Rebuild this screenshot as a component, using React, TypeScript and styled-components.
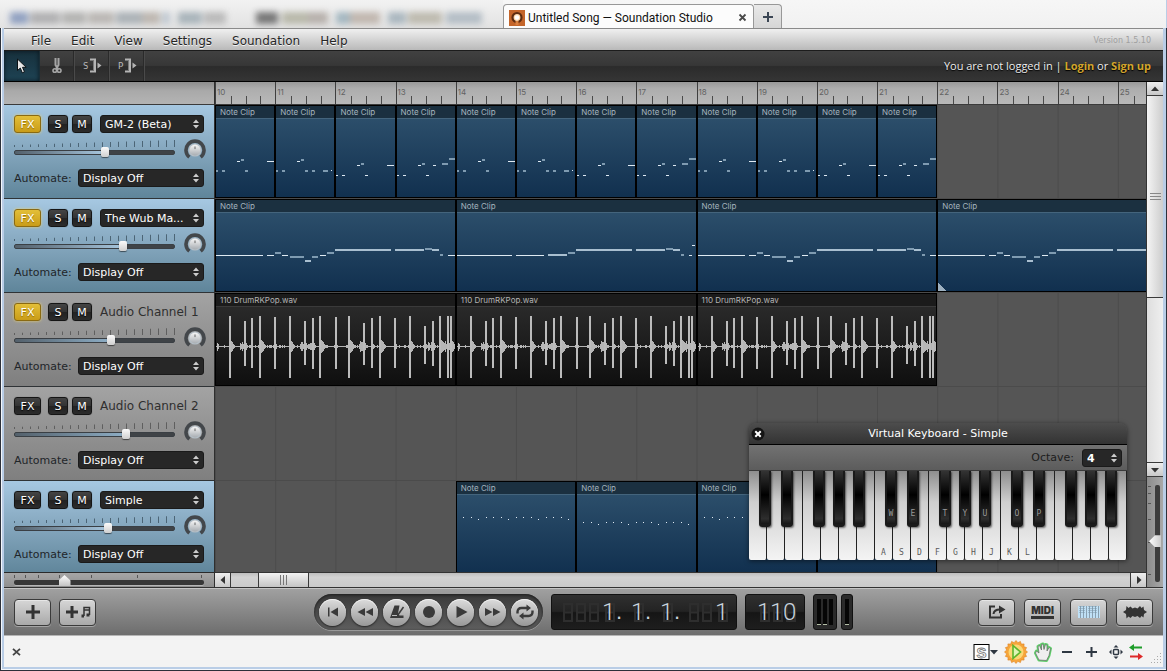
import React from "react";
import styled, { createGlobalStyle, css } from "styled-components";

const sans = '"DejaVu Sans", Verdana, sans-serif';
const tiny = '"Inter", "Liberation Sans", sans-serif';
const chrome = '"Open Sans", "Noto Sans", sans-serif';

const GlobalStyle = createGlobalStyle`
  *, *::before, *::after { box-sizing: border-box; }
  body { margin: 0; background: #f3f3f3; font-family: ${sans}; font-size: 12px; }
  button, select, input { font: inherit; margin: 0; padding: 0; }
  svg { display: block; }
`;

/* ---------- window frame ---------- */

const Page = styled.div`
  display: flex;
  flex-direction: column;
  height: 100vh;
  overflow: hidden;
`;

const TabStrip = styled.header`
  display: flex;
  align-items: flex-end;
  height: 28px;
  flex: none;
  background: linear-gradient(#f6f6f6, #f1f1f1);
  border-right: 1px solid #b9cde6;
`;

const BlurredTabs = styled.div`
  width: 503px;
  height: 28px;
  overflow: hidden;
  background: linear-gradient(#f2f2f2, #e2e2e2);
  svg { filter: blur(3px); opacity: 0.8; }
`;

const Tab = styled.div`
  display: flex;
  align-items: center;
  width: 251px;
  height: 24px;
  padding: 2px 6px 0 5px;
  background: #fcfcfc;
  border: 1px solid #989898;
  border-bottom: 0;
  border-radius: 4px 4px 0 0;
  font-family: "Roboto", ${chrome};
  font-size: 12px;
  line-height: 16px;
  color: #111;
`;

const TabTitle = styled.span`
  flex: 1;
  margin-left: 3px;
  white-space: nowrap;
`;

const PlainButton = styled.button`
  display: flex;
  align-items: center;
  justify-content: center;
  border: 0;
  background: none;
  color: inherit;
`;

const NewTab = styled(PlainButton)`
  width: 28px;
  height: 24px;
  border: 1px solid #989898;
  border-left: 0;
  border-bottom: 0;
  border-radius: 0 4px 0 0;
  background: linear-gradient(#e9e9e9, #d6d6d6);
`;

const Frame = styled.div`
  flex: 1;
  min-height: 0;
  display: flex;
  flex-direction: column;
  padding: 0 3px 3px;
  background: #b9cde6;
  border: 1px solid #2c303a;
  border-top: 0;
  box-shadow: inset 1px -1px 0 #f4f7fb;
`;

const Studio = styled.main`
  position: relative;
  flex: 1;
  min-height: 0;
  display: flex;
  flex-direction: column;
`;

/* ---------- menu and tool bars ---------- */

const MenuBar = styled.nav`
  display: flex;
  align-items: center;
  gap: 20px;
  height: 23px;
  flex: none;
  padding: 2px 12px 0 27px;
  background: linear-gradient(#f0f0f0, #b9b9b9);
  border-top: 1px solid #8a8a8a;
  border-bottom: 1px solid #1c1c1c;
`;

const MenuItem = styled(PlainButton)`
  font-size: 12px;
  line-height: 16px;
  color: #262626;
  text-shadow: 0 1px 0 #f4f4f4;
`;

const Version = styled.span`
  margin-left: auto;
  font-family: ${sans};
  font-size: 8px;
  color: #a0a0a0;
`;

const ToolBar = styled.div`
  display: flex;
  align-items: center;
  height: 31px;
  flex: none;
  background: linear-gradient(#414141 0, #373737 48%, #2b2b2b 52%, #353535 100%);
  border-bottom: 1px solid #000;
`;

const Tool = styled(PlainButton)<{ $active?: boolean }>`
  width: 35px;
  height: 30px;
  border-right: 1px solid #4a4a4a;
  box-shadow: inset -1px 0 0 #2a2a2a;
  ${(p) => p.$active && css`
    width: 36px;
    background: linear-gradient(#17303c, #1e4354);
    border-right-color: #1a2d36;
    box-shadow: inset 0 0 4px #0a171e;
  `}
`;

const Account = styled.p`
  margin: 0 12px 0 auto;
  font-family: ${chrome};
  font-size: 11px;
  line-height: 16px;
  color: #eee;
  text-shadow: 0 1px 1px #000;
  a { color: #d3a52c; font-weight: 700; text-decoration: none; }
`;

/* ---------- workspace ---------- */

const Workspace = styled.div`
  flex: 1;
  min-height: 0;
  display: grid;
  grid-template-columns: 211px minmax(0, 1fr) 17px;
  grid-template-rows: minmax(0, 1fr);
`;

const Column = styled.div`
  display: flex;
  flex-direction: column;
  min-height: 0;
`;

const HeadColumn = styled(Column)`
  border-right: 1px solid #2f2f2f;
`;

const RulerCorner = styled.div`
  height: 23px;
  flex: none;
  background: linear-gradient(#8d8d8d, #a9a9a9 40%, #b4b4b4);
  border-bottom: 1px solid #3b3b3b;
`;

const Clipped = styled.div`
  flex: 1;
  min-height: 0;
  overflow: hidden;
`;

const TrackHead = styled.section<{ $tone: "blue" | "grey" }>`
  display: flex;
  flex-direction: column;
  height: 94px;
  padding: 10px 10px 0;
  border-bottom: 1px solid #2f3336;
  background: ${(p) => p.$tone === "blue"
    ? "linear-gradient(#a6c8e2, #84a6bd 50%, #5f859a)"
    : "linear-gradient(#a3a3a3, #919191 50%, #7f7f7f)"};
`;

const HeadRow = styled.div`
  display: flex;
  align-items: center;
  height: 18px;
`;

const Pad = styled.button<{ $lit?: boolean; $wide?: boolean }>`
  width: ${(p) => (p.$wide ? 27 : 20)}px;
  height: 18px;
  padding-top: 1px;
  margin-right: ${(p) => (p.$wide ? 7 : 4)}px;
  border: 1px solid #151515;
  border-radius: 3px;
  background: linear-gradient(#444 0, #333 48%, #222 52%, #2c2c2c);
  box-shadow: 0 0 1px #00000066;
  color: #fff;
  font-size: 11px;
  line-height: 15px;
  text-shadow: 0 1px 1px #000;
  ${(p) => p.$lit && css`
    border-color: #8a6a12;
    background: linear-gradient(#e3bf38, #c99c18);
    box-shadow: 0 0 3px #e6d070;
    text-shadow: 0 1px 1px #8d6a05;
  `}
`;

const SelectBox = styled.span<{ $grow?: boolean; $gap?: number }>`
  display: grid;
  align-items: center;
  flex: ${(p) => (p.$grow ? "1" : "none")};
  min-width: 0;
  margin-left: ${(p) => p.$gap ?? 0}px;
  & > * { grid-area: 1 / 1; }
  svg { justify-self: end; margin-right: 4px; pointer-events: none; }
`;

const Select = styled.select<{ $bold?: boolean }>`
  appearance: none;
  width: 100%;
  height: 18px;
  padding: 1px 14px 0 4px;
  border: 1px solid #1a1a1a;
  border-radius: 3px;
  background: #272727;
  color: #fff;
  font-size: 11px;
  font-weight: ${(p) => (p.$bold ? 700 : 400)};
  line-height: 16px;
`;

const OctaveSelect = styled(Select)`
  width: 40px;
`;

const ChannelName = styled.span`
  margin-left: 4px;
  font-size: 12px;
  line-height: 16px;
  color: #2f2f2f;
`;

const VolumeRow = styled.div`
  display: flex;
  align-items: flex-start;
  justify-content: space-between;
  height: 36px;
  padding-top: 6px;
  margin-right: -2px;
`;

const VolumeBox = styled.div`
  display: flex;
  flex-direction: column;
`;

const Volume = styled.input<{ $fill: number; $tone: "blue" | "grey" }>`
  appearance: none;
  width: 161px;
  height: 10px;
  background: none;
  &::-webkit-slider-runnable-track {
    height: 5px;
    border-radius: 2px;
    border: 1px solid #3a3f44;
    background: linear-gradient(90deg, #53606b, ${(p) => (p.$tone === "blue" ? "#a8c8e0" : "#8fb0c8")} ${(p) => p.$fill}%, #3f4347 ${(p) => p.$fill}%);
  }
  &::-webkit-slider-thumb {
    appearance: none;
    width: 8px;
    height: 10px;
    margin-top: -4px;
    border-radius: 2px;
    background: linear-gradient(#fbfbfb, #cfcfcf);
    box-shadow: 0 1px 1px #00000088;
  }
`;

const AutomateLabel = styled.label`
  padding-top: 2px;
  font-size: 11px;
  line-height: 16px;
  width: 64px;
  color: #1f2529;
`;

const ZoomX = styled.div`
  height: 16px;
  flex: none;
  padding: 2px 10px 0;
  border-top: 1px solid #2a2a2a;
  border-bottom: 1px solid #333;
  background: linear-gradient(#a6a6a6, #8f8f8f);
  display: grid;
  & > * { grid-area: 1 / 1; }
`;

const ZoomXInput = styled.input`
  appearance: none;
  width: 100%;
  height: 12px;
  background: none;
  &::-webkit-slider-runnable-track {
    height: 5px;
    margin-top: 3px;
    border-radius: 2px;
    background: #373737;
    box-shadow: 0 1px 0 #b5b5b5;
  }
  &::-webkit-slider-thumb {
    appearance: none;
    width: 12px;
    height: 11px;
    margin-top: -5px;
    background: linear-gradient(#fff, #c4c4c4);
    clip-path: polygon(50% 0, 100% 50%, 100% 100%, 0 100%, 0 50%);
  }
`;

/* ---------- timeline ---------- */

const Timeline = styled(Column)`
  background: #555;
  overflow: hidden;
`;

const Ruler = styled.div`
  height: 23px;
  flex: none;
  overflow: hidden;
  border-bottom: 1px solid #3b3b3b;
  background: linear-gradient(#999, #adadad 30%, #b9b9b9);
`;

const Bars = styled.div`
  display: grid;
  grid-template-columns: repeat(16, 1fr);
  width: 963px;
  height: 100%;
`;

const Bar = styled.div`
  display: grid;
  grid-template-columns: repeat(4, 1fr);
  align-items: end;
  height: 22px;
  border-left: 1px solid #3f3f3f;
  & > * { grid-row: 1; }
`;

const BarNumber = styled.span`
  grid-column: 1 / -1;
  align-self: start;
  padding: 5px 0 0 1px;
  font-family: ${tiny};
  font-size: 8px;
  line-height: 10px;
  color: #626262;
`;

const Tick = styled.i<{ $at: number }>`
  grid-column: ${(p) => p.$at};
  height: 8px;
  border-left: 1px solid #4a4a4a;
`;

const Lane = styled.div`
  height: 94px;
  overflow: hidden;
  border-bottom: 1px solid #4b4b4b;
  background: #555;
`;

const LaneGrid = styled(Bars)`
  background: linear-gradient(90deg, #4b4b4b 1px, transparent 1px) 0 0 / 6.25% 100%;
`;

const ClipBox = styled.article<{ $start: number; $span: number; $audio?: boolean }>`
  grid-row: 1;
  grid-column: ${(p) => p.$start} / span ${(p) => p.$span};
  display: flex;
  flex-direction: column;
  min-width: 0;
  height: 93px;
  overflow: hidden;
  border: 1px solid #000;
  background: ${(p) => (p.$audio
    ? "linear-gradient(#2e2e2e, #0f0f0f)"
    : "linear-gradient(#30536f, #11304f)")};
`;

const ClipTitle = styled.h3<{ $audio?: boolean }>`
  flex: none;
  height: 13px;
  margin: 0;
  padding-left: 4px;
  border-bottom: 1px solid ${(p) => (p.$audio ? "#3a3a3a" : "#44647c")};
  background: ${(p) => (p.$audio ? "#1b1b1b" : "#1b3040")};
  font-family: ${tiny};
  font-size: 8px;
  font-weight: 400;
  line-height: 12px;
  white-space: nowrap;
  color: ${(p) => (p.$audio ? "#b4b4b4" : "#a5b4bf")};
`;

/* ---------- scroll bars ---------- */

const HScroll = styled.div`
  display: flex;
  height: 16px;
  flex: none;
  border-top: 1px solid #333;
  border-bottom: 1px solid #333;
  background: linear-gradient(#bebebe, #d2d2d2 30%, #cacaca);
`;

const ScrollButton = styled(PlainButton)<{ $side?: string }>`
  width: 16px;
  height: 14px;
  flex: none;
  background: linear-gradient(#eee, #c8c8c8);
  ${(p) => p.$side && `border-${p.$side}: 1px solid #3a3a3a;`}
`;

const HThumb = styled(PlainButton)`
  width: 51px;
  height: 14px;
  margin: 0 auto 0 27px;
  border: solid #3a3a3a;
  border-width: 0 1px;
  background: linear-gradient(#f2f2f2, #c4c4c4);
`;

const SideColumn = styled(Column)`
  border-left: 1px solid #333;
  background: linear-gradient(90deg, #dedede, #efefef);
`;

const VScroll = styled(Column)`
  flex: 1;
`;

const VThumb = styled(PlainButton)`
  height: 202px;
  width: 16px;
  border-bottom: 1px solid #3a3a3a;
  background: linear-gradient(90deg, #f4f4f4, #cdcdcd);
`;

const ZoomY = styled.div`
  display: grid;
  flex: none;
  height: 112px;
  justify-items: end;
  padding: 8px 1px 5px 0;
  border-top: 1px solid #3a3a3a;
  border-bottom: 1px solid #333;
  background: linear-gradient(90deg, #8c8c8c, #a8a8a8);
  & > * { grid-area: 1 / 1; }
`;

const ZoomYInput = styled.input`
  appearance: none;
  writing-mode: vertical-lr;
  direction: rtl;
  width: 14px;
  height: 97px;
  background: none;
  &::-webkit-slider-runnable-track {
    width: 5px;
    margin-left: 5px;
    border-radius: 2px;
    background: #3c3c3c;
  }
  &::-webkit-slider-thumb {
    appearance: none;
    width: 12px;
    height: 12px;
    margin-left: -6px;
    background: linear-gradient(90deg, #fff, #ccc);
    clip-path: polygon(0 50%, 50% 0, 100% 0, 100% 100%, 50% 100%);
  }
`;

/* ---------- transport ---------- */

const Transport = styled.footer`
  display: grid;
  grid-template-columns: 1fr auto 1fr;
  align-items: center;
  flex: none;
  height: 48px;
  padding: 0 10px;
  border-top: 1px solid #c4c4c4;
  border-bottom: 1px solid #b5b5b5;
  background: linear-gradient(#a0a0a0, #6d6d6d);
`;

const Cluster = styled.div<{ $end?: boolean; $gap: number }>`
  display: flex;
  align-items: center;
  gap: ${(p) => p.$gap}px;
  justify-content: ${(p) => (p.$end ? "flex-end" : "flex-start")};
`;

const BoxButton = styled(PlainButton)`
  width: 37px;
  height: 27px;
  border: 1px solid #3a3a3a;
  border-radius: 4px;
  background: linear-gradient(#d6d6d6, #a9a9a9);
  box-shadow: inset 0 1px 0 #e6e6e6, 0 1px 0 #a5a5a5;
  color: #333;
`;

const MidiText = styled.span`
  border-bottom: 3px solid #333;
  font-family: ${tiny};
  font-size: 10px;
  font-weight: 900;
  line-height: 11px;
`;

const Pill = styled.div`
  display: flex;
  align-items: center;
  gap: 5px;
  height: 36px;
  padding: 0 5px;
  border-radius: 18px;
  background: linear-gradient(#3a3a3a, #5e5e5e);
  box-shadow: inset 0 1px 3px #1c1c1c, 0 1px 0 #999;
`;

const Round = styled(PlainButton)`
  width: 27px;
  height: 27px;
  border-radius: 50%;
  background: linear-gradient(#dcdcdc, #989898);
  box-shadow: inset 0 1px 0 #efefef, 0 1px 2px #222;
`;

const Lcd = styled.output`
  display: flex;
  align-items: center;
  height: 36px;
  padding: 0 11px;
  border-radius: 3px;
  border: 1px solid #111;
  background: linear-gradient(#303030 0, #232323 48%, #151515 52%, #1e1e1e);
`;

const LcdGroup = styled.span`
  display: flex;
  gap: 3px;
`;

const LcdCell = styled.span`
  display: grid;
  align-items: center;
  justify-items: end;
  width: 10px;
  height: 19px;
  font-family: "Liberation Sans Narrow", "Roboto", sans-serif;
  font-size: 24px;
  font-weight: 300;
  line-height: 19px;
  color: #c9d3dd;
  & > * { grid-area: 1 / 1; }
`;

const LcdDot = styled.span`
  width: 19px;
  padding-left: 4px;
  font-family: "Liberation Sans", sans-serif;
  font-size: 22px;
  line-height: 20px;
  color: #c9d3dd;
`;

const Meter = styled.div<{ $width: number }>`
  display: flex;
  gap: 2px;
  justify-content: center;
  width: ${(p) => p.$width}px;
  height: 36px;
  padding: 4px 0;
  border: 1px solid #111;
  border-radius: 3px;
  background: #2a2a2a;
`;

const MeterBar = styled.i<{ $off?: boolean }>`
  width: 4px;
  background: #060606;
  border-bottom: 1px solid ${(p) => (p.$off ? "#060606" : "#b5c0a8")};
`;

/* ---------- status bar ---------- */

const StatusBar = styled.div`
  display: flex;
  align-items: center;
  justify-content: space-between;
  flex: none;
  height: 31px;
  padding: 0 0 0 8px;
  background: #f3f3f3;
`;

/* ---------- virtual keyboard ---------- */

const KeyboardWindow = styled.aside`
  position: absolute;
  right: 36px;
  bottom: 76px;
  width: 378px;
  border-radius: 8px 8px 0 0;
  box-shadow: 0 1px 5px #00000088;
`;

const KeyboardTitle = styled.div`
  display: grid;
  grid-template-columns: 18px 1fr 18px;
  align-items: center;
  height: 22px;
  border-bottom: 1px solid #000;
  border-radius: 8px 8px 0 0;
  background: linear-gradient(#4d4d4d, #333);
  color: #fff;
  font-size: 11px;
  line-height: 16px;
  text-align: center;
  h2 { margin: 0; font: inherit; }
`;

const OctaveRow = styled.div`
  display: flex;
  align-items: center;
  justify-content: flex-end;
  gap: 8px;
  height: 26px;
  padding-right: 5px;
  border-bottom: 1px solid #3a3a3a;
  background: linear-gradient(#727272, #5c5c5c);
  font-size: 11px;
  color: #1d1d1d;
`;

const Keys = styled.div`
  display: flex;
`;

const OctaveKeys = styled.div`
  position: relative;
  display: flex;
`;

const keyText = css`
  display: flex;
  align-items: flex-end;
  justify-content: center;
  font-family: "DejaVu Sans Mono", monospace;
  font-size: 8px;
  line-height: 10px;
`;

const WhiteKey = styled.button`
  ${keyText}
  width: 18px;
  height: 89px;
  padding-bottom: 2px;
  border: 0;
  border-right: 1px solid #222;
  border-radius: 0 0 2px 2px;
  background: linear-gradient(#8e8e8e, #cfcfcf 35%, #f4f4f4);
  color: #5a5a5a;
`;

const BlackKey = styled.button<{ $x: number }>`
  ${keyText}
  position: absolute;
  top: 0;
  left: ${(p) => p.$x}px;
  width: 12px;
  height: 56px;
  padding-bottom: 5px;
  border: solid #1a1a1a;
  border-width: 0 2px 3px;
  border-radius: 0 0 3px 3px;
  background: linear-gradient(#333 0, #000 45%, #2e2e2e 90%, #161616);
  box-shadow: 1px 1px 2px #00000088;
  color: #999;
`;

/* ---------- data ---------- */

type Note = [x: number, y: number, w: number, soft?: number];

const riffA: Note[] = [[1, 65, 2, 1], [7, 65, 3, 1], [22, 56, 3], [26, 54, 3, 1], [30, 65, 3, 1], [52, 56, 7]];
const riffB: Note[] = [[1, 65, 2, 1], [7, 65, 3, 1], [22, 56, 3], [26, 54, 3, 1], [30, 65, 3, 1], [37, 65, 3, 1], [48, 65, 5, 1], [56, 65, 1]];
const riffC: Note[] = [[1, 70, 2], [7, 70, 3], [22, 60, 3], [26, 58, 3, 1], [30, 70, 3], [52, 60, 7]];
const riffD: Note[] = [[1, 70, 2], [7, 70, 3], [22, 60, 3], [26, 58, 3, 1], [30, 70, 3], [37, 60, 3], [46, 58, 6, 1], [53, 53, 7, 1]];
const riffs = [riffA, riffB, riffC, riffD];

const wubTail: Note[] = [[120, 50, 56, 2], [180, 50, 29, 2], [210, 49, 7, 1], [217, 50, 7, 2], [225, 55, 3, 1]];
const wub: Note[] = [[1, 56, 47], [52, 56, 7], [60, 53, 6, 1], [67, 56, 6], [75, 57, 14, 1], [90, 61, 6, 2], [97, 57, 6, 1], [105, 56, 6], [112, 53, 7, 1], ...wubTail, [233, 56, 7]];
const wubFlat: Note[] = [[1, 56, 55], [60, 56, 28], [92, 55, 19, 2], [112, 53, 7, 1], ...wubTail, [233, 56, 3], [236, 46, 3]];

const pulse = (base: number): Note[] =>
  Array.from({ length: 15 }, (_, i): Note => [7 + Math.round(i * 7.5), base + (i % 4 === 2 ? 2 : 0), 1]);

interface ClipData { start: number; span: number; title: string; notes?: Note[]; corner?: boolean }
interface TrackData { name: string; tone: "blue" | "grey"; fx?: boolean; instrument?: boolean; level: number; clips: ClipData[] }

const tracks: TrackData[] = [
  {
    name: "GM-2 (Beta)", tone: "blue", fx: true, instrument: true, level: 57,
    clips: Array.from({ length: 12 }, (_, i) => ({ start: i + 1, span: 1, title: "Note Clip", notes: riffs[i % 4] })),
  },
  {
    name: "The Wub Ma...", tone: "blue", fx: true, instrument: true, level: 69,
    clips: [1, 5, 9, 13].map((start) => ({ start, span: 4, title: "Note Clip", notes: start === 5 ? wubFlat : wub, corner: start === 13 })),
  },
  {
    name: "Audio Channel 1", tone: "grey", fx: true, level: 61,
    clips: [1, 5, 9].map((start) => ({ start, span: 4, title: "110 DrumRKPop.wav" })),
  },
  { name: "Audio Channel 2", tone: "grey", level: 71, clips: [] },
  {
    name: "Simple", tone: "blue", instrument: true, level: 59,
    clips: [5, 7, 9, 11].map((start, i) => ({ start, span: 2, title: "Note Clip", notes: pulse(i % 2 ? 41 : 36) })),
  },
];

/* Each hit: x, height above the centre line, height below, decay length */
const hits: [number, number, number, number][] = [
  [1, 4, 4, 1], [13, 31, 31, 5], [28, 26, 19, 3], [35, 29, 21, 1], [43, 31, 31, 6], [58, 30, 22, 2], [73, 31, 31, 5],
  [88, 26, 18, 3], [96, 29, 22, 3], [103, 31, 31, 6], [119, 30, 22, 1], [132, 31, 31, 6], [147, 24, 18, 3],
  [155, 29, 21, 2], [163, 31, 31, 6], [178, 29, 21, 2], [193, 31, 31, 5], [208, 21, 17, 2], [216, 26, 19, 3],
  [223, 31, 31, 6], [231, 31, 31, 3], [234, 31, 31, 5],
];

function drumWave(): string {
  let seed = 11;
  const rand = () => (seed = (seed * 1103515245 + 12345) % 2147483648) / 2147483648;
  let d = "";
  for (let x = 0; x < 239; x++) {
    let h = rand() < 0.25 ? 2 : 1;
    for (const [hx, , , decay] of hits) {
      const dist = x - hx;
      if (dist >= 0 && dist < decay + 1) h = Math.max(h, (decay + 3) * (1 - dist / (decay + 2)));
      if (dist < 0 && dist > -5 && decay === 3) h = Math.max(h, 2 + rand() * 4);
    }
    h = Math.round(h);
    d += `M${x + 0.5} ${32 - h}V${31 + h}`;
  }
  return d;
}
const wave = drumWave();

/* ---------- parts ---------- */

const Spin = () => (
  <svg width="8" height="10" viewBox="0 0 8 10" fill="#ccc"><path d="M4 0.500 7 4H1zM4 9.500 7 6H1z" /></svg>
);

const noteFill = ["#dfeaf3", "#7f9bb1", "#a9bfd0"];

function Clip({ start, span, title, notes, corner }: ClipData) {
  const audio = !notes;
  return (
    <ClipBox $start={start} $span={span} $audio={audio}>
      <ClipTitle $audio={audio}>{title}</ClipTitle>
      {notes ? (
        <svg width="240" height="78" viewBox="1 14 240 78" shapeRendering="crispEdges">
          {notes.map(([x, y, w, soft = 0], i) => (
            <rect key={i} x={x} y={y} width={w} height={soft ? 2 : 1} fill={noteFill[soft]} />
          ))}
          {corner && <path d="M1 84l8 8H1z" fill="#9db0c0" />}
        </svg>
      ) : (
        <svg width="239" height="78" viewBox="0 -8 239 78" shapeRendering="crispEdges">
          <path d={wave} stroke="#b6b6b6" />
          {hits.map(([x, up, down]) => (
            <rect key={x} x={x} y={32 - up} width={up > 5 ? 2 : 1} height={up + down} fill="#bcbcbc" />
          ))}
        </svg>
      )}
    </ClipBox>
  );
}

const Knob = () => (
  <PlainButton aria-label="Pan">
    <svg width="22" height="22" viewBox="0 0 22 22">
      <defs>
        <linearGradient id="knob" x2="0" y2="1"><stop stopColor="#f6f6f6" /><stop offset="1" stopColor="#a8adb2" /></linearGradient>
      </defs>
      <path d="M5.4 18.2A9 9 0 1 1 16.6 18.2" fill="none" stroke="#43474b" strokeWidth="3.6" />
      <circle cx="11" cy="11" r="6.6" fill="#b4bec6" />
      <circle cx="11" cy="11" r="5.4" fill="url(#knob)" />
      <path d="M11 7.500v2.600" stroke="#666" />
    </svg>
  </PlainButton>
);

function Head({ track, id }: { track: TrackData; id: string }) {
  return (
    <TrackHead $tone={track.tone}>
      <HeadRow>
        <Pad $wide $lit={track.fx}>FX</Pad>
        <Pad>S</Pad>
        <Pad>M</Pad>
        {track.instrument ? (
          <SelectBox $grow $gap={4}>
            <Select aria-label="Instrument"><option>{track.name}</option></Select>
            <Spin />
          </SelectBox>
        ) : <ChannelName>{track.name}</ChannelName>}
      </HeadRow>
      <VolumeRow>
        <VolumeBox>
          <svg width="161" height="8" viewBox="0 0 161 8" stroke={track.tone === "blue" ? "#4c6576" : "#5f5f5f"}>
            {Array.from({ length: 21 }, (_, i) => (
              <path key={i} d={`M${i * 8 + 0.5} ${6 - i * 0.25}V8`} />
            ))}
          </svg>
          <Volume type="range" aria-label={`${track.name} volume`} defaultValue={track.level} $fill={track.level} $tone={track.tone} />
        </VolumeBox>
        <Knob />
      </VolumeRow>
      <HeadRow>
        <AutomateLabel htmlFor={id}>Automate:</AutomateLabel>
        <SelectBox $grow>
          <Select id={id}><option>Display Off</option></Select>
          <Spin />
        </SelectBox>
      </HeadRow>
    </TrackHead>
  );
}

const Arrow = ({ turn }: { turn: number }) => (
  <svg width="10" height="10" viewBox="0 0 10 10"><path d="M5 2.500 9 7H1z" fill="#333" transform={`rotate(${turn} 5 5)`} /></svg>
);

const Digit = ({ value }: { value?: string }) => (
  <LcdCell>
    <svg width="10" height="19" viewBox="0 0 10 19" fill="none" stroke="#2e2e2e" strokeWidth="2">
      <path d="M1 1h8v17H1zM1 9.500h8" />
    </svg>
    {value && <span>{value}</span>}
  </LcdCell>
);

const transportIcons: [string, React.ReactNode][] = [
  ["To start", <><path d="M4 4.500h1.500v9H4z" /><path d="M14 4.500v9L6.500 9z" /></>],
  ["Rewind", <path d="M9 5v8L1.500 9zM17 5v8L9.500 9z" />],
  ["Metronome", <><path d="M6.500 2.500h5l-1.500 8 1.500 2h4v2.500H2z" /><path d="M9.500 12.500 15.500 4" stroke="#3a3a3a" strokeWidth="1.500" /><path d="M4 12.500h5" stroke="#bbb" /></>],
  ["Record", <circle cx="9" cy="9" r="6" />],
  ["Play", <path d="M4.500 3v12L15.500 9z" />],
  ["Forward", <path d="M1 5v8L8.500 9zM9 5v8L16.500 9z" />],
  ["Loop", <><path d="M1.500 10.500V9q0-4 4-4H12M16.500 7.500V9q0 4-4 4H6" fill="none" stroke="#3a3a3a" strokeWidth="2.400" /><path d="M10.500 1.500v7L15 5zM7.500 9.500v7L3 13z" /></>],
];

function VirtualKeyboard() {
  const white = ["", "", "", "", "", "", "", "A", "S", "D", "F", "G", "H", "J", "K", "L", "", "", "", "", ""];
  const black = ["", "", "", "", "", "W", "E", "T", "Y", "U", "O", "P", "", "", ""];
  const offsets = [10, 32, 64, 84, 104];
  return (
    <KeyboardWindow>
      <KeyboardTitle>
        <PlainButton aria-label="Close keyboard">
          <svg width="14" height="14" viewBox="0 0 14 14">
            <circle cx="7" cy="7" r="6.500" fill="#141414" />
            <path d="M4.300 4.300l5.400 5.400M9.700 4.300 4.300 9.700" stroke="#fff" strokeWidth="2" />
          </svg>
        </PlainButton>
        <h2>Virtual Keyboard - Simple</h2>
      </KeyboardTitle>
      <OctaveRow>
        <label htmlFor="octave">Octave:</label>
        <SelectBox>
          <OctaveSelect id="octave" $bold><option>4</option></OctaveSelect>
          <Spin />
        </SelectBox>
      </OctaveRow>
      <Keys>
        {[0, 1, 2].map((o) => (
          <OctaveKeys key={o}>
            {white.slice(o * 7, o * 7 + 7).map((k, i) => <WhiteKey key={i}>{k}</WhiteKey>)}
            {offsets.map((x, i) => <BlackKey key={x} $x={x}>{black[o * 5 + i]}</BlackKey>)}
          </OctaveKeys>
        ))}
      </Keys>
    </KeyboardWindow>
  );
}

const ghostShapes: [number, number, string][] = [
  [10, 18, "#7c90b8"], [30, 30, "#a4a4a6"], [62, 24, "#a8a8a6"], [88, 26, "#b0aca8"], [116, 26, "#9ea6ac"],
  [142, 18, "#b4aca4"], [162, 8, "#b4c0cc"], [178, 24, "#9aa8b0"], [204, 22, "#b0b0b0"], [256, 22, "#5c5c5c"], [282, 26, "#aeae9c"],
  [308, 20, "#aca49e"], [336, 14, "#94acb8"], [350, 30, "#b8aca2"], [388, 18, "#9cacb6"], [408, 34, "#b4b0a2"], [446, 36, "#a8b4be"],
];

const burst = Array.from({ length: 32 }, (_, i) => {
  const a = (i * Math.PI) / 16;
  const r = i % 2 ? 9.5 : 11.5;
  return `${(12 + r * Math.cos(a)).toFixed(1)},${(12 + r * Math.sin(a)).toFixed(1)}`;
}).join(" ");

const handPath = "M5 18 1.500 11l1-2 2.500 2L4 4.500l1.500-1L7.500 8V2.500L9 2l1 5.500 1.500-5L13 3v6l2-3.500 1.500 1-1.500 7-2.500 5z";

export default function App() {
  return (
    <Page>
      <GlobalStyle />
      <TabStrip>
        <BlurredTabs>
          <svg width="503" height="28" viewBox="0 0 503 28">
            {ghostShapes.map(([x, w, c]) => <rect key={x} x={x} y={12} width={w} height={12} fill={c} />)}
          </svg>
        </BlurredTabs>
        <Tab>
          <svg width="16" height="16" viewBox="0 0 16 16">
            <rect width="16" height="16" fill="#c4652a" />
            <circle cx="8" cy="7.500" r="4.500" fill="#ffd9ae" stroke="#5e2c10" strokeWidth="2.200" />
            <circle cx="8" cy="7.500" r="2.200" fill="#fff" />
            <path d="M6.500 11h3v4h-3z" fill="#d9803f" />
          </svg>
          <TabTitle>Untitled Song — Soundation Studio</TabTitle>
          <PlainButton aria-label="Close tab">
            <svg width="9" height="9" viewBox="0 0 9 9" stroke="#4a4a4a" strokeWidth="1.800"><path d="M1.500 1.500l6 6M7.500 1.500l-6 6" /></svg>
          </PlainButton>
        </Tab>
        <NewTab aria-label="New tab">
          <svg width="12" height="12" viewBox="0 0 12 12" stroke="#3b4654" strokeWidth="2"><path d="M6 1v10M1 6h10" /></svg>
        </NewTab>
      </TabStrip>
      <Frame>
        <Studio>
          <MenuBar>
            {["File", "Edit", "View", "Settings", "Soundation", "Help"].map((m) => <MenuItem key={m}>{m}</MenuItem>)}
            <Version>Version 1.5.10</Version>
          </MenuBar>
          <ToolBar>
            <Tool $active aria-label="Select">
              <svg width="12" height="16" viewBox="0 0 12 16"><path d="M1.500 1v11.500l2.800-2.400 2 4.700 2.200-1-2-4.500h3.700z" fill="#e8e8e8" stroke="#0b1216" /></svg>
            </Tool>
            <Tool aria-label="Cut">
              <svg width="12" height="18" viewBox="0 0 12 18" fill="none" stroke="#a5a5a5" strokeWidth="1.600">
                <path d="M4.500 1v7l2.500 4M7.500 1v7L5 12" strokeWidth="2" /><circle cx="3.800" cy="13.500" r="1.800" /><circle cx="8.200" cy="13.500" r="1.800" />
              </svg>
            </Tool>
            {["S", "P"].map((k) => (
              <Tool key={k} aria-label={`Snap ${k}`}>
                <svg width="19" height="18" viewBox="0 0 19 18">
                  <text x="0" y="12" fontFamily="DejaVu Sans Mono" fontSize="9" fill="#b9b9b9">{k}</text>
                  <path d="M7 2.500h5v12H7" fill="none" stroke="#b5b5b5" strokeWidth="2" />
                  <path d="M10.500 4v9" stroke="#7a7a7a" />
                  <path d="M14.500 5.500 18.500 8.500 14.500 11.500z" fill="#b5b5b5" />
                </svg>
              </Tool>
            ))}
            <Account>
              You are not logged in | <a href="#login">Login</a> or <a href="#signup">Sign up</a>
            </Account>
          </ToolBar>

          <Workspace>
            <HeadColumn>
              <RulerCorner />
              <Clipped>
                {tracks.map((t, i) => <Head key={t.name} track={t} id={`automate-${i}`} />)}
              </Clipped>
              <ZoomX>
                <svg width="190" height="3" viewBox="0 0 190 3" stroke="#555">
                  {[0, 11, 24, 45, 77, 123, 187].map((x) => <path key={x} d={`M${x + 0.5} 0v3`} />)}
                </svg>
                <ZoomXInput type="range" aria-label="Horizontal zoom" defaultValue={25} />
              </ZoomX>
            </HeadColumn>

            <Timeline>
              <Ruler>
                <Bars>
                  {Array.from({ length: 16 }, (_, i) => (
                    <Bar key={i}>
                      <BarNumber>{i + 10}</BarNumber>
                      <Tick $at={2} /><Tick $at={3} /><Tick $at={4} />
                    </Bar>
                  ))}
                </Bars>
              </Ruler>
              <Clipped>
                {tracks.map((t) => (
                  <Lane key={t.name}>
                    <LaneGrid>{t.clips.map((c) => <Clip key={c.start} {...c} />)}</LaneGrid>
                  </Lane>
                ))}
              </Clipped>
              <HScroll>
                <ScrollButton $side="right" aria-label="Scroll left"><Arrow turn={-90} /></ScrollButton>
                <HThumb aria-label="Scroll horizontally">
                  <svg width="9" height="10" viewBox="0 0 9 10" stroke="#777"><path d="M1.500 0v10M4.500 0v10M7.500 0v10" /></svg>
                </HThumb>
                <ScrollButton $side="left" aria-label="Scroll right"><Arrow turn={90} /></ScrollButton>
              </HScroll>
            </Timeline>

            <SideColumn>
              <VScroll>
                <ScrollButton $side="bottom" aria-label="Scroll up"><Arrow turn={0} /></ScrollButton>
                <VThumb aria-label="Scroll vertically">
                  <svg width="11" height="9" viewBox="0 0 11 9" stroke="#888"><path d="M0 1.500h11M0 4.500h11M0 7.500h11" /></svg>
                </VThumb>
              </VScroll>
              <ScrollButton $side="top" aria-label="Scroll down"><Arrow turn={180} /></ScrollButton>
              <ZoomY>
                <svg width="15" height="97" viewBox="0 0 15 97" stroke="#555">
                  {[1, 8, 18, 34, 57, 89].map((y) => <path key={y} d={`M1 ${y + 0.5}h3`} />)}
                </svg>
                <ZoomYInput type="range" aria-label="Vertical zoom" defaultValue={41} />
              </ZoomY>
            </SideColumn>
          </Workspace>

          <Transport>
            <Cluster $gap={8}>
              <BoxButton aria-label="Add channel">
                <svg width="14" height="14" viewBox="0 0 14 14" stroke="#333" strokeWidth="3"><path d="M7 0v14M0 7h14" /></svg>
              </BoxButton>
              <BoxButton aria-label="Add instrument">
                <svg width="26" height="14" viewBox="0 0 26 14" fill="none" stroke="#333">
                  <path d="M7 1v12M1 7h12" strokeWidth="3" />
                  <path d="M19 11V2.500h5.500V10M19 5h5.500" strokeWidth="1.500" />
                  <path d="M16.500 11h2.500M21.500 10h3" strokeWidth="3" />
                </svg>
              </BoxButton>
            </Cluster>
            <Cluster $gap={8}>
              <Pill>
                {transportIcons.map(([label, icon]) => (
                  <Round key={label} aria-label={label}>
                    <svg width="18" height="18" viewBox="0 0 18 18" fill="#3a3a3a">{icon}</svg>
                  </Round>
                ))}
              </Pill>
              <Lcd>
                <LcdGroup><Digit /><Digit /><Digit /><Digit value="1" /></LcdGroup><LcdDot>.</LcdDot>
                <Digit value="1" /><LcdDot>.</LcdDot>
                <Digit value="1" /><LcdDot>.</LcdDot>
                <LcdGroup><Digit /><Digit /><Digit value="1" /></LcdGroup>
              </Lcd>
              <Lcd>
                <LcdGroup><Digit value="1" /><Digit value="1" /><Digit value="0" /></LcdGroup>
              </Lcd>
              <Cluster $gap={4}>
                <Meter $width={24}><MeterBar /><MeterBar /><MeterBar $off /></Meter>
                <Meter $width={12}><MeterBar /></Meter>
              </Cluster>
            </Cluster>
            <Cluster $gap={9} $end>
              <BoxButton aria-label="Export">
                <svg width="18" height="16" viewBox="0 0 18 16" fill="none" stroke="#333" strokeWidth="2">
                  <path d="M7 2.500H2v11h11V10" /><path d="M5.500 10Q6 5.500 12 5.500" /><path d="M11 1.500 17.500 5.500 11 9.500z" fill="#333" stroke="none" />
                </svg>
              </BoxButton>
              <BoxButton><MidiText>MIDI</MidiText></BoxButton>
              <BoxButton aria-label="Virtual keyboard">
                <svg width="22" height="12" viewBox="0 0 22 12">
                  <rect width="22" height="12" fill="#bfe0f5" />
                  <path d="M2.500 0v12M5.500 0v12M8.500 0v12M11.500 0v12M14.500 0v12M17.500 0v12M20.500 0v12" stroke="#8aa0b0" />
                  <path d="M2.500 0v8M5.500 0v8M11.500 0v8M14.500 0v8M17.500 0v8" stroke="#7f99ab" strokeWidth="2" strokeDasharray="1 1" />
                </svg>
              </BoxButton>
              <BoxButton aria-label="Audio editor">
                <svg width="24" height="14" viewBox="0 0 24 14"><path d="M0 7l3-2 .5-4 2 2 2-1.500 2 2 2.500-1 2.500 1L17 1l1.500 2L20.500 1.500 21 5l3 2-3 2-.5 3.500-2-1.500-1.500 2-2.500-2-2.500 1-2.500-1-2 2-2-1.500-2 2L3 9z" fill="#333" /></svg>
              </BoxButton>
            </Cluster>
          </Transport>
          <VirtualKeyboard />
        </Studio>

        <StatusBar>
          <PlainButton aria-label="Close bar">
            <svg width="9" height="8" viewBox="0 0 9 8" stroke="#444" strokeWidth="1.800"><path d="M1 .8l7 6.400M8 .8 1 7.200" /></svg>
          </PlainButton>
          <Cluster $gap={6}>
            <PlainButton aria-label="Script blocker">
              <svg width="25" height="16" viewBox="0 0 25 16">
                <rect x="1" y=".5" width="15" height="15" fill="#fff" stroke="#000" />
                <text x="8.500" y="13.500" textAnchor="middle" fontFamily="Liberation Sans" fontWeight="700" fontSize="15" fill="#fff" stroke="#777" strokeWidth=".8">S</text>
                <path d="M17 6h8l-4 4.500z" fill="#2e3742" />
              </svg>
            </PlainButton>
            <PlainButton aria-label="Run">
              <svg width="24" height="24" viewBox="0 0 24 24">
                <polygon points={burst} fill="#f6a53a" stroke="#dd7f1c" strokeWidth=".6" />
                <circle cx="12" cy="12" r="7.500" fill="#fbd774" />
                <path d="M9 5.500v13l7.500-6.500z" fill="#dff5b4" stroke="#5cb52c" strokeWidth="1.600" />
              </svg>
            </PlainButton>
            <PlainButton aria-label="Hand">
              <svg width="18" height="20" viewBox="0 0 18 20" strokeLinejoin="round">
                <path d={handPath} fill="#eee" stroke="#5fd06a" strokeWidth="3" />
                <path d={handPath} fill="#efefef" stroke="#666" strokeWidth=".7" />
              </svg>
            </PlainButton>
            <Cluster $gap={12}>
              <PlainButton aria-label="Zoom out">
                <svg width="16" height="12" viewBox="0 0 16 12" stroke="#2e3742" strokeWidth="2"><path d="M4 6h10" /></svg>
              </PlainButton>
              <PlainButton aria-label="Zoom in">
                <svg width="11" height="12" viewBox="0 0 11 12" stroke="#2e3742" strokeWidth="2"><path d="M5.500 1v10M0 6h11" /></svg>
              </PlainButton>
              <PlainButton aria-label="Fit">
                <svg width="14" height="14" viewBox="0 0 14 14" fill="#2e3742">
                  <rect x="4.500" y="4.500" width="5" height="5" rx="1" fill="none" stroke="#2e3742" strokeWidth="1.500" />
                  <path d="M7 0l2.500 2.500h-5zM7 14l2.500-2.500h-5zM0 7l2.500-2.500v5zM14 7l-2.500-2.500v5z" />
                </svg>
              </PlainButton>
            </Cluster>
            <Cluster $gap={7}>
              <PlainButton aria-label="Transfer">
                <svg width="14" height="16" viewBox="0 0 14 16">
                  <path d="M0 3.500 5 0v2.500h8v2H5V7z" fill="#1f9d2a" />
                  <path d="M14 12.500 9 9v2.500H1v2h8V16z" fill="#dd2a2a" />
                </svg>
              </PlainButton>
              <svg width="13" height="26" viewBox="0 0 13 26" fill="#aaa">
                {[[10, 14], [7, 17], [10, 17], [4, 20], [7, 20], [10, 20], [1, 23], [4, 23], [7, 23], [10, 23]].map(([x, y]) => (
                  <rect key={`${x}-${y}`} x={x} y={y} width="1" height="1" />
                ))}
              </svg>
            </Cluster>
          </Cluster>
        </StatusBar>
      </Frame>
    </Page>
  );
}
